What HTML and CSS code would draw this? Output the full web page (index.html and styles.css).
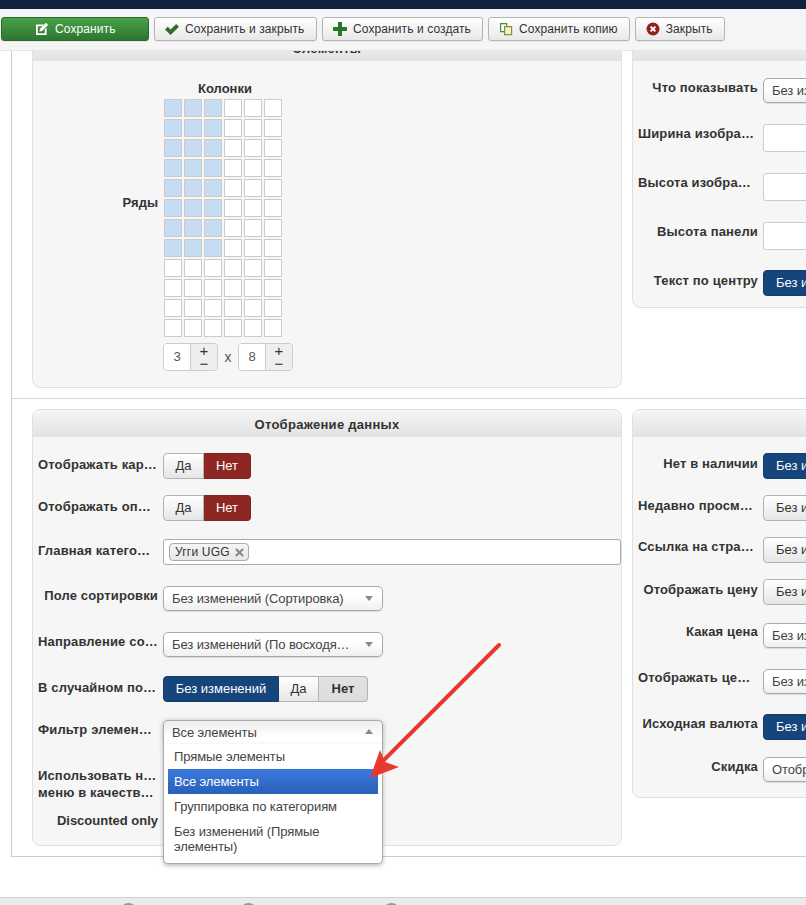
FILE: index.html
```html
<!DOCTYPE html>
<html lang="ru">
<head>
<meta charset="utf-8">
<title>Модуль</title>
<link rel="stylesheet" href="styles.css">
</head>
<body>
<div class="topbar"></div>
<div class="toolbar">
  <button class="tbtn tbtn-save">
    <svg class="ico" viewBox="0 0 14 14"><path fill="#fff" d="M1 2.5h8L7.2 4.3H2.8v7h7V7.5l1.8-1.8V13H1z"/><path fill="#fff" d="M11 .8l2.2 2.2-6 6-2.8.6.6-2.8z"/></svg>
    Сохранить
  </button>
  <button class="tbtn tbtn-close">
    <svg class="ico" viewBox="0 0 14 14"><path fill="#2f6f25" d="M0 7.5L2.8 4.7l2.8 2.8L11.2 1.9 14 4.7 5.6 13.1z"/></svg>
    Сохранить и закрыть
  </button>
  <button class="tbtn">
    <svg class="ico" viewBox="0 0 14 14"><path fill="#2a7526" d="M5 0h4v5h5v4H9v5H5V9H0V5h5z"/></svg>
    Сохранить и создать
  </button>
  <button class="tbtn">
    <svg class="ico" viewBox="0 0 14 14"><path fill="#fff" stroke="#4d8a2e" stroke-width="1.2" d="M1.6 1.6h6v8h-6z"/><path fill="#f4f0c8" stroke="#8a8f3a" stroke-width="1.2" d="M5.6 4.6h7v8h-7z"/></svg>
    Сохранить копию
  </button>
  <button class="tbtn tbtn-exit">
    <svg class="ico" viewBox="0 0 14 14"><circle cx="7" cy="7" r="6.5" fill="#8e2320"/><path stroke="#fff" stroke-width="2" d="M4.6 4.6l4.8 4.8M9.4 4.6l-4.8 4.8"/></svg>
    Закрыть
  </button>
</div>

<main class="main">
  <div class="frame">
    <section class="section">
      <div class="panel">
        <h3 class="phead">Элементы</h3>
        <div class="pbody-grid">
          <div class="rows-label">Ряды</div>
          <div class="picker">
            <div class="cols-label">Колонки</div>
            <div class="cells">
              <i class="on"></i><i class="on"></i><i class="on"></i><i></i><i></i><i></i>
              <i class="on"></i><i class="on"></i><i class="on"></i><i></i><i></i><i></i>
              <i class="on"></i><i class="on"></i><i class="on"></i><i></i><i></i><i></i>
              <i class="on"></i><i class="on"></i><i class="on"></i><i></i><i></i><i></i>
              <i class="on"></i><i class="on"></i><i class="on"></i><i></i><i></i><i></i>
              <i class="on"></i><i class="on"></i><i class="on"></i><i></i><i></i><i></i>
              <i class="on"></i><i class="on"></i><i class="on"></i><i></i><i></i><i></i>
              <i class="on"></i><i class="on"></i><i class="on"></i><i></i><i></i><i></i>
              <i></i><i></i><i></i><i></i><i></i><i></i>
              <i></i><i></i><i></i><i></i><i></i><i></i>
              <i></i><i></i><i></i><i></i><i></i><i></i>
              <i></i><i></i><i></i><i></i><i></i><i></i>
            </div>
            <div class="spins">
              <div class="spin"><span class="spin-val">3</span><span class="spin-btns"><b>+</b><b>−</b></span></div>
              <span class="times">x</span>
              <div class="spin"><span class="spin-val">8</span><span class="spin-btns"><b>+</b><b>−</b></span></div>
            </div>
          </div>
        </div>
      </div>

      <div class="panel panel-r">
        <h3 class="phead"></h3>
        <div class="pbody pbody-a">
          <div class="row h46"><label class="lbl">Что показывать</label><div class="sel">Без изменений</div></div>
          <div class="row h49"><label class="lbl">Ширина изображения</label><div class="inp"></div></div>
          <div class="row h49"><label class="lbl">Высота изображения</label><div class="inp"></div></div>
          <div class="row h48"><label class="lbl">Высота панели</label><div class="inp"></div></div>
          <div class="row h37"><label class="lbl lbl-s">Текст по центру</label><div class="seg"><span class="sb blue">Без изменений</span></div></div>
        </div>
      </div>
    </section>

    <section class="section">
      <div class="panel">
        <h3 class="phead">Отображение данных</h3>
        <div class="pbody">
          <div class="row h42"><label class="lbl lbl-m">Отображать картинку</label><div class="seg"><span class="sb w41">Да</span><span class="sb red w47">Нет</span></div></div>
          <div class="row h44"><label class="lbl lbl-m">Отображать описание</label><div class="seg"><span class="sb w41">Да</span><span class="sb red w47">Нет</span></div></div>
          <div class="row h47"><label class="lbl lbl-m">Главная категория</label>
            <div class="multi"><span class="chip">Угги UGG <svg class="chip-x" viewBox="0 0 10 10"><path stroke="#888" stroke-width="2.4" d="M1 1l8 8M9 1l-8 8"/></svg></span></div>
          </div>
          <div class="row h46"><label class="lbl">Поле сортировки</label><div class="sel">Без изменений (Сортировка)<em class="tri"></em></div></div>
          <div class="row h44"><label class="lbl">Направление сортировки</label><div class="sel"><span class="sel-t">Без изменений (По восходящей)</span><em class="tri"></em></div></div>
          <div class="row h44"><label class="lbl lbl-m">В случайном порядке</label><div class="seg"><span class="sb blue w116">Без изменений</span><span class="sb w40">Да</span><span class="sb grey w49">Нет</span></div></div>
          <div class="row h47"><label class="lbl">Фильтр элементов</label>
            <div class="sel sel-open">Все элементы<em class="tri tri-up"></em>
              <ul class="drop">
                <li>Прямые элементы</li>
                <li class="hl">Все элементы</li>
                <li>Группировка по категориям</li>
                <li class="tall">Без изменений (Прямые элементы)</li>
              </ul>
            </div>
          </div>
          <div class="row h46"><label class="lbl lbl-two"><span>Использовать название</span><span>меню в качестве заголовка</span></label></div>
          <div class="row h32"><label class="lbl lbl-z">Discounted only</label></div>
        </div>
      </div>

      <div class="panel panel-r">
        <h3 class="phead"></h3>
        <div class="pbody">
          <div class="row h42"><label class="lbl lbl-s">Нет в наличии</label><div class="seg"><span class="sb blue">Без изменений</span></div></div>
          <div class="row h42"><label class="lbl lbl-s">Недавно просмотренные</label><div class="seg"><span class="sb">Без изменений</span></div></div>
          <div class="row h42"><label class="lbl">Ссылка на страницу</label><div class="seg"><span class="sb">Без изменений</span></div></div>
          <div class="row h44"><label class="lbl lbl-s">Отображать цену</label><div class="seg"><span class="sb">Без изменений</span></div></div>
          <div class="row h46"><label class="lbl lbl-t">Какая цена</label><div class="sel">Без изменений</div></div>
          <div class="row h45"><label class="lbl lbl-t">Отображать цену без скидки</label><div class="sel">Без изменений</div></div>
          <div class="row h43"><label class="lbl">Исходная валюта</label><div class="seg"><span class="sb blue">Без изменений</span></div></div>
          <div class="row h40"><label class="lbl">Скидка</label><div class="sel">Отображать</div></div>
        </div>
      </div>
    </section>
  </div>
</main>

<footer class="footer"><span class="dot d1"></span><span class="dot d2"></span><span class="dot d3"></span></footer>

<svg class="arrow" viewBox="0 0 806 905" aria-hidden="true">
  <path d="M499 645L380 764" stroke="#e8392e" stroke-width="4" stroke-linecap="round" fill="none"/>
  <path d="M370 778L380 750L385 762L399 767z" fill="#e8392e"/>
</svg>
</body>
</html>
```
FILE: styles.css
```css
* { box-sizing: border-box; }
html, body { margin: 0; padding: 0; }
body {
  width: 806px; height: 905px; overflow: hidden; position: relative;
  display: flex; flex-direction: column; background: #fff;
  font: 13px/16px "Liberation Sans", Arial, sans-serif; color: #333;
}
.topbar { height: 9px; flex: none; background: #10223e; }
.toolbar {
  height: 42px; flex: none; display: flex; gap: 5px; padding: 8px 0 0 1px;
  background: #f5f5f5; border-bottom: 1px solid #e6e6e6;
}
.tbtn {
  height: 24px; padding: 0 11px 0 10px; display: flex; align-items: center; gap: 6px;
  font: 12px/16px "Liberation Sans", Arial, sans-serif; letter-spacing: .1px; color: #333;
  background: linear-gradient(#fff, #e8e8e8); border: 1px solid #b5b5b5; border-radius: 3px;
  box-shadow: 0 1px 1px rgba(0,0,0,.06); white-space: nowrap;
}
.tbtn-save {
  width: 148px; padding-left: 33px; color: #fff;
  background: linear-gradient(#48a148, #2f7530); border-color: #2a6a2b;
}
.tbtn-close { width: 163px; }
.tbtn-exit { width: 90px; }
.ico { width: 14px; height: 14px; flex: none; }

.main { flex: 1; overflow: hidden; min-height: 0; }
.frame {
  margin: -28px 0 0 11px; width: 1260px;
  border-left: 1px solid #ccc; border-bottom: 1px solid #ccc;
}
.section {
  display: flex; align-items: flex-start; gap: 10px;
  padding: 10px 0 10px 20px; border-bottom: 1px solid #d4d4d4;
}
.section:last-child { border-bottom: 0; }
.panel {
  width: 590px; flex: none; background: #f6f6f6;
  border: 1px solid #e0e0e0; border-radius: 8px;
}
.panel-r { width: 600px; }
.phead {
  margin: 0; height: 27px; text-align: center; border-radius: 7px 7px 0 0; overflow: hidden;
  font: bold 13px/30px "Liberation Sans", Arial, sans-serif; letter-spacing: .28px; color: #333;
  background: linear-gradient(#f6f6f6, #e2e2e2);
}
.pbody { padding: 16px 0 0 5px; }
.pbody-a { padding-top: 17px; }
.pbody-grid { display: flex; height: 326px; padding: 20px 0 0 5px; }

.rows-label {
  width: 120px; margin-right: 5px; padding-top: 114px; text-align: right; font-weight: bold;
}
.picker { width: 130px; }
.cols-label { text-align: center; font-weight: bold; height: 18px; margin-left: -6px; width: 136px; }
.cells {
  display: grid; grid-template-columns: repeat(6, 18px); gap: 2px; margin-left: 1px;
}
.cells i { height: 18px; background: #fff; border: 1px solid #ccc; }
.cells i.on { background: #c6dcf3; }
.spins { display: flex; align-items: center; margin-top: 6px; width: 140px; }
.spin { display: flex; width: 55px; height: 28px; border: 1px solid #ccc; border-radius: 4px; overflow: hidden; flex: none; }
.spin-val { width: 27px; background: #fff; text-align: center; line-height: 26px; color: #555; border-right: 1px solid #ccc; }
.spin-btns { flex: 1; background: #eee; display: flex; flex-direction: column; align-items: center; }
.spin-btns b { font: 15px/13px "Liberation Sans", Arial, sans-serif; color: #333; }
.times { width: 20px; text-align: center; font-size: 14px; color: #555; }

.row { display: flex; align-items: flex-start; gap: 5px; }
.h32 { height: 32px; } .h37 { height: 37px; } .h40 { height: 40px; }
.h42 { height: 42px; } .h43 { height: 43px; } .h44 { height: 44px; }
.h45 { height: 45px; } .h46 { height: 46px; } .h47 { height: 47px; }
.h48 { height: 48px; } .h49 { height: 49px; }
.lbl {
  width: 120px; flex: none; padding-top: 2px; text-align: right; font-weight: bold; letter-spacing: .15px;
  white-space: nowrap; overflow: hidden; text-overflow: ellipsis;
}
.lbl-m { padding-top: 4px; }
.lbl-s { padding-top: 3px; }
.lbl-t { padding-top: 1px; }
.lbl-z { padding-top: 0; letter-spacing: 0; }
.lbl-two { padding-top: 0; line-height: 17px; text-align: left; }
.lbl-two span { display: block; overflow: hidden; text-overflow: ellipsis; }

.seg { display: flex; height: 26px; flex: none; }
.sb {
  display: block; height: 26px; padding: 0 12px; line-height: 24px; text-align: center; white-space: nowrap;
  background: linear-gradient(#fff, #e6e6e6); border: 1px solid #b3b3b3; border-left-width: 0; color: #333;
}
.sb:first-child { border-left-width: 1px; border-radius: 4px 0 0 4px; }
.sb:last-child { border-radius: 0 4px 4px 0; }
.sb:only-child { border-radius: 4px; }
.sb.red { background: #8c2723; border-color: #7d2320; color: #fff; }
.sb.blue { background: #15457a; border-color: #123d6c; color: #fff; }
.sb.grey { background: linear-gradient(#e2e2e2, #ddd); font-weight: bold; }
.w40 { width: 40px; padding: 0; } .w41 { width: 41px; padding: 0; } .w47 { width: 47px; padding: 0; }
.w49 { width: 49px; padding: 0; } .w116 { width: 116px; padding: 0; }

.sel {
  position: relative; width: 220px; height: 25px; flex: none; padding-left: 8px;
  line-height: 23px; letter-spacing: -.1px; white-space: nowrap; color: #444;
  background: linear-gradient(#fff 40%, #f0f0f0);
  border: 1px solid #aaa; border-radius: 5px; box-shadow: 0 1px 1px rgba(0,0,0,.12);
}
.sel-t { display: block; width: 181px; overflow: hidden; text-overflow: ellipsis; }
.tri {
  position: absolute; right: 9px; top: 9px; width: 0; height: 0;
  border-left: 4px solid transparent; border-right: 4px solid transparent; border-top: 5px solid #888;
}
.tri-up { border-top: 0; border-bottom: 5px solid #888; top: 8px; }
.sel-open {
  background: linear-gradient(#eee, #fff 70%); border-radius: 5px 5px 0 0; border-bottom: 0;
  box-shadow: 0 1px 5px rgba(0,0,0,.3); z-index: 2;
}
.drop {
  position: absolute; left: -1px; top: 23px; width: 220px; height: 120px; margin: 0; padding: 0 4px;
  list-style: none; background: #fff; border: 1px solid #aaa; border-top: 0;
  border-radius: 0 0 5px 5px; box-shadow: 0 2px 4px rgba(0,0,0,.25);
}
.drop li { height: 25px; padding: 0 6px; line-height: 25px; color: #444; }
.drop li.hl { color: #fff; background: linear-gradient(#3875d7 20%, #2a62bc 90%); }
.drop li.tall { height: 38px; padding: 5px 30px 0 6px; line-height: 15px; white-space: normal; }

.multi { width: 458px; height: 26px; padding: 3px 5px; background: #fff; border: 1px solid #aaa; border-radius: 3px; flex: none; }
.chip {
  display: inline-flex; align-items: center; gap: 5px; height: 18px; padding: 0 4px 0 5px;
  font-size: 12px; letter-spacing: .2px; background: linear-gradient(#f4f4f4, #e8e8e8); border: 1px solid #aaa; border-radius: 4px; color: #333;
}
.chip-x { width: 9px; height: 9px; }
.inp { width: 200px; height: 28px; background: #fff; border: 1px solid #ccc; border-radius: 3px; flex: none; }

.footer {
  height: 8px; flex: none; overflow: hidden; display: flex;
  background: #ebebeb; border-top: 1px solid #d2d2d2;
}
.dot { width: 17px; height: 17px; border-radius: 50%; background: #999; margin-top: 5px; flex: none; }
.d1 { margin-left: 120px; }
.d2 { margin-left: 103px; }
.d3 { margin-left: 126px; }
.arrow { position: absolute; left: 0; top: 0; width: 806px; height: 905px; pointer-events: none; z-index: 5; }
```
